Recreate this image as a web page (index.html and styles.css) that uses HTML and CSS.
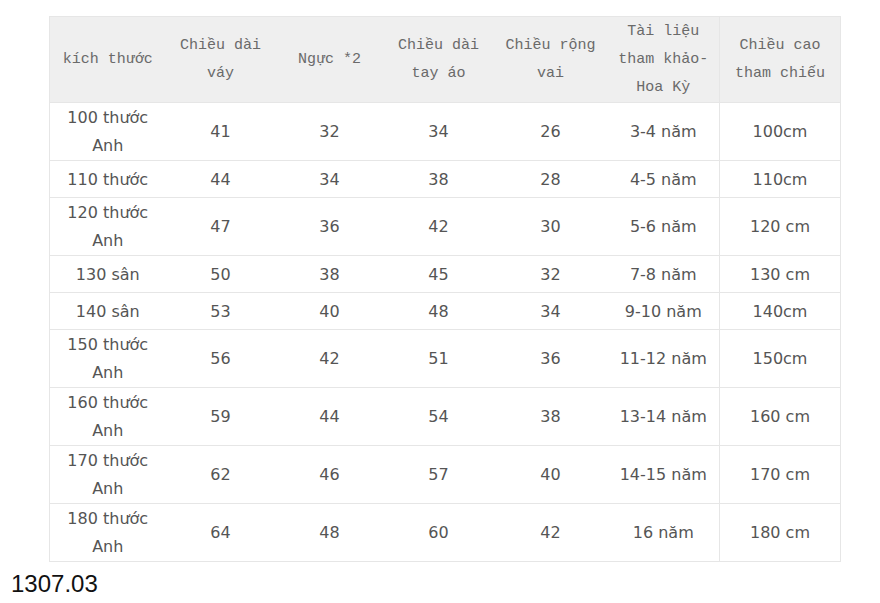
FILE: index.html
```html
<!DOCTYPE html>
<html lang="vi">
<head>
<meta charset="utf-8">
<title>Bảng kích thước</title>
<link rel="stylesheet" href="styles.css">
</head>
<body>
<table class="size-table">
  <colgroup>
    <col class="c1"><col class="c2"><col class="c3"><col class="c4"><col class="c5"><col class="c6"><col class="c7">
  </colgroup>
  <thead>
    <tr>
      <th>kích thước</th>
      <th>Chiều dài<br>váy</th>
      <th>Ngực *2</th>
      <th>Chiều dài<br>tay áo</th>
      <th>Chiều rộng<br>vai</th>
      <th>Tài liệu<br>tham khảo-<br>Hoa Kỳ</th>
      <th class="sep">Chiều cao<br>tham chiếu</th>
    </tr>
  </thead>
  <tbody>
    <tr><td>100 thước<br>Anh</td><td>41</td><td>32</td><td>34</td><td>26</td><td>3-4 năm</td><td class="sep">100cm</td></tr>
    <tr><td>110 thước</td><td>44</td><td>34</td><td>38</td><td>28</td><td>4-5 năm</td><td class="sep">110cm</td></tr>
    <tr><td>120 thước<br>Anh</td><td>47</td><td>36</td><td>42</td><td>30</td><td>5-6 năm</td><td class="sep">120 cm</td></tr>
    <tr><td>130 sân</td><td>50</td><td>38</td><td>45</td><td>32</td><td>7-8 năm</td><td class="sep">130 cm</td></tr>
    <tr><td>140 sân</td><td>53</td><td>40</td><td>48</td><td>34</td><td>9-10 năm</td><td class="sep">140cm</td></tr>
    <tr><td>150 thước<br>Anh</td><td>56</td><td>42</td><td>51</td><td>36</td><td>11-12 năm</td><td class="sep">150cm</td></tr>
    <tr><td>160 thước<br>Anh</td><td>59</td><td>44</td><td>54</td><td>38</td><td>13-14 năm</td><td class="sep">160 cm</td></tr>
    <tr><td>170 thước<br>Anh</td><td>62</td><td>46</td><td>57</td><td>40</td><td>14-15 năm</td><td class="sep">170 cm</td></tr>
    <tr><td>180 thước<br>Anh</td><td>64</td><td>48</td><td>60</td><td>42</td><td>16 năm</td><td class="sep">180 cm</td></tr>
  </tbody>
</table>
<div class="code">1307.03</div>
</body>
</html>
```
FILE: styles.css
```css
html, body {
  background: #ffffff;
}
body {
  margin: 8px;
}
.size-table {
  margin: 8px 0 0 41px;
  width: 792px;
  border-collapse: collapse;
  table-layout: fixed;
  border: 1px solid #e6e6e6;
}
.c1 { width: 116px; }
.c2 { width: 110px; }
.c3 { width: 108px; }
.c4 { width: 110px; }
.c5 { width: 114px; }
.c6 { width: 112px; }
.c7 { width: 121px; }
.size-table th {
  background: #efefef;
  font-family: "Liberation Mono", "DejaVu Sans Mono", monospace;
  font-weight: normal;
  font-size: 15px;
  line-height: 28px;
  color: #6a6a6a;
  height: 84px;
  padding: 1px 0 0 0;
  text-align: center;
  vertical-align: middle;
  border-bottom: 1px solid #e6e6e6;
}
.size-table td {
  font-family: "DejaVu Sans", Verdana, sans-serif;
  font-size: 16px;
  line-height: 28px;
  color: #555555;
  height: 35px;
  padding: 1px 0 0 0;
  text-align: center;
  vertical-align: middle;
  border-bottom: 1px solid #e6e6e6;
}
.size-table .sep {
  border-left: 1px solid #e6e6e6;
}
.code {
  margin-top: 9px;
  padding-left: 3px;
  font-family: "Liberation Sans", Arial, sans-serif;
  font-size: 24px;
  line-height: 26px;
  color: #111111;
}
```
